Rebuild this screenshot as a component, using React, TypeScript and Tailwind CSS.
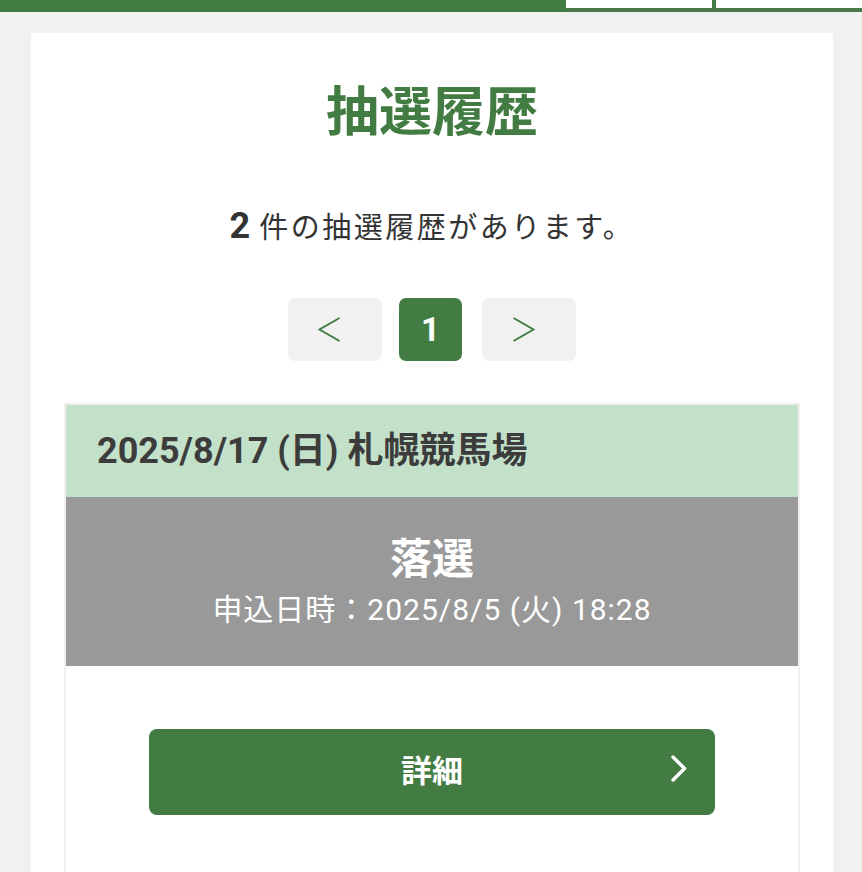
const font = { fontFamily: 'Roboto, "Noto Sans CJK JP", sans-serif' };

function PageButton({ dir, className }: { dir: 'prev' | 'next'; className?: string }) {
  return (
    <button className={`flex h-[63px] w-[94px] items-center justify-center rounded-[7px] bg-[#f1f1f1] pr-[11px] ${className ?? ''}`}>
      <svg width="23" height="25" viewBox="0 0 23 25" fill="none">
        <polyline
          points={dir === 'prev' ? '21.5,1 1.5,12.5 21.5,24' : '1.5,1 21.5,12.5 1.5,24'}
          stroke="#437c42"
          strokeWidth="2"
        />
      </svg>
    </button>
  );
}

export default function App() {
  return (
    <div className="min-h-[872px] bg-[#f1f1f1]" style={font}>
      {/* top nav */}
      <div className="flex h-[12px] bg-[#437c42]">
        <div className="flex-1" />
        <div className="flex h-[12px] w-[297px] gap-[4px] border-b-[4px] border-[#4a7a47] pl-[1px]">
          <div className="h-[8px] flex-1 bg-white" />
          <div className="h-[8px] flex-1 bg-white" />
        </div>
      </div>

      <div className="ml-[31px] mr-[29px] mt-[21px] bg-white px-[33px] pt-[50px]">
        <h1 className="text-center text-[53px] font-bold leading-[60px] text-[#437c42]">抽選履歴</h1>

        <p className="mt-[56px] flex items-baseline justify-center text-[#333]">
          <span className="text-[36px] font-bold">2</span>
          <span className="ml-[9px] text-[29px] tracking-[2.5px]">件の抽選履歴があります。</span>
        </p>

        <div className="mt-[45px] flex justify-center">
          <PageButton dir="prev" />
          <button className="ml-[17px] flex h-[63px] w-[63px] items-center justify-center rounded-[7px] bg-[#437c42] text-[33px] font-bold text-white">
            1
          </button>
          <PageButton dir="next" className="ml-[20px]" />
        </div>

        <div className="mt-[42px] border-x-2 border-t-2 border-[#f0f0f0] pb-[80px]">
          <div className="flex h-[92px] items-center bg-[#c3e1c9] px-[31px] text-[36px] font-bold text-[#3c3c3c]">
            2025/8/17 (日) 札幌競馬場
          </div>
          <div className="flex h-[169px] flex-col items-center justify-center bg-[#999999] text-white">
            <div className="text-[42px] font-bold leading-[52px]">落選</div>
            <div className="mt-[4px] text-[30px] leading-[40px] tracking-[1px]">申込日時：2025/8/5 (火) 18:28</div>
          </div>
          <div className="flex justify-center pt-[63px]">
            <button className="relative flex h-[86px] w-[566px] items-center justify-center rounded-[8px] bg-[#437c42] text-[31px] font-bold text-white">
              詳細
              <svg
                className="absolute right-[28px] top-[26px]"
                width="16"
                height="27"
                viewBox="0 0 16 27"
                fill="none"
              >
                <polyline
                  points="2,2 13.5,13.5 2,25"
                  stroke="white"
                  strokeWidth="3.4"
                  strokeLinecap="round"
                  strokeLinejoin="round"
                />
              </svg>
            </button>
          </div>
        </div>
      </div>
    </div>
  );
}
